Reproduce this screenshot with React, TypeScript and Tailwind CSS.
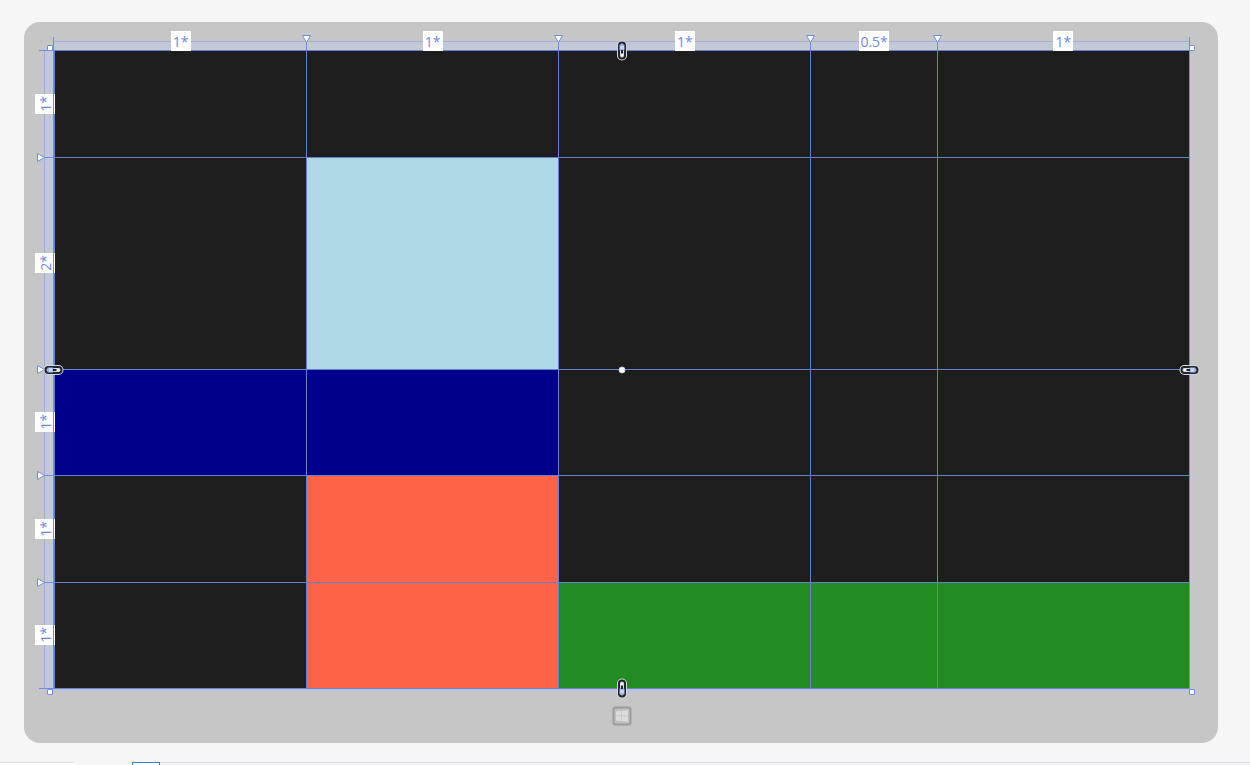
import clsx from "clsx"

const columns = ["1*", "1*", "1*", "0.5*", "1*"];
const rows = ["1*", "2*", "1*", "1*", "1*"];

// "row-column" -> fill of the element placed there
const fills: Record<string, string> = {
    "1-1": "bg-[#add8e6]",
    "2-0": "bg-[#00008b]",
    "2-1": "bg-[#00008b]",
    "3-1": "bg-[#ff6347]",
    "4-1": "bg-[#ff6347]",
    "4-2": "bg-[#228b22]",
    "4-3": "bg-[#228b22]",
    "4-4": "bg-[#228b22]",
};

const TopRuler = () => {
    return (
        <div className="relative col-start-2 grid grid-cols-[2fr_2fr_2fr_1fr_2fr] gap-px pl-0.5 pr-px">
            <div className="absolute inset-x-0 bottom-0 h-[9px] border-t border-[#9fb0d8] bg-[#c2c8d5]" />
            <div className="absolute left-0 bottom-0 h-[13px] w-px bg-[#6d8de0]" />
            <div className="absolute right-0 bottom-0 h-[13px] w-px bg-[#6d8de0]" />
            {columns.map((size, i) => (
                <div key={i} className="relative flex justify-center pt-[9px]">
                    {i > 0 && (
                        <svg className="absolute -left-[5px] top-3" width="9" height="16" viewBox="0 0 9 16">
                            <path d="M4.5 8V16" stroke="#6d8de0" />
                            <path d="M0.5 1.5H8.5L4.5 8.5Z" fill="#fff" stroke="#6d8de0" />
                        </svg>
                    )}
                    <span className="z-10 h-5 min-w-5 bg-white px-px text-center text-sm leading-[22px]">{size}</span>
                </div>
            ))}
        </div>
    )
};

const LeftRuler = () => {
    return (
        <div className="relative col-start-1 grid grid-rows-[1fr_2fr_1fr_1fr_1fr] gap-px py-px">
            <div className="absolute inset-y-0 right-0 w-[9px] border-l border-[#9fb0d8] bg-[#c2c8d5]" />
            <div className="absolute right-0 top-0 h-px w-[14px] bg-[#6d8de0]" />
            <div className="absolute right-0 bottom-0 h-px w-[14px] bg-[#6d8de0]" />
            {rows.map((size, i) => (
                <div key={i} className="relative flex items-center pl-[11px]">
                    {i > 0 && (
                        <svg className="absolute -top-[5px] left-3" width="17" height="9" viewBox="0 0 17 9">
                            <path d="M8 4.5H17" stroke="#6d8de0" />
                            <path d="M1.5 0.5V8.5L8.5 4.5Z" fill="#fff" stroke="#6d8de0" />
                        </svg>
                    )}
                    <span className="z-10 size-5 -rotate-90 bg-white text-center text-sm leading-[22px]">{size}</span>
                </div>
            ))}
        </div>
    )
};

const corners = [
    "-left-[6px] -top-[5px]",
    "-right-[5px] -top-[5px]",
    "-left-[6px] -bottom-[6px]",
    "-right-[5px] -bottom-[6px]",
];

const LinkIcon = ({ className }: { className?: string }) => {
    return (
        <svg className={className} width="11" height="21" viewBox="0 0 11 21">
            <rect x="0.5" y="0.5" width="10" height="20" rx="5" fill="#d6d8db" />
            <rect x="2.5" y="2.5" width="6" height="16" rx="3" fill="#d6d8db" stroke="#22252d" strokeWidth="2" />
            <rect x="3" y="5" width="5" height="5" fill="#c3d7fd" stroke="#4c68ab" strokeWidth="0.6" />
            <path d="M5.5 10V13.5" stroke="#22252d" strokeWidth="2" />
            <circle cx="5.5" cy="15" r="1.2" fill="#f4f5f7" />
        </svg>
    )
};

// links that anchor each side of the selected grid
const anchors = [
    { side: "Top", className: "left-1/2 -top-[10px] -translate-x-1/2", icon: "" },
    { side: "Bottom", className: "left-1/2 -bottom-[10px] -translate-x-1/2", icon: "rotate-180" },
    { side: "Left", className: "-left-[10px] top-1/2 -translate-y-1/2", icon: "-rotate-90" },
    { side: "Right", className: "-right-[10px] top-1/2 -translate-y-1/2", icon: "rotate-90" },
];

const Board = () => {
    return (
        <div className="relative col-start-2 aspect-[1137/639]">
            {/* the grid lines are the background showing through the gaps */}
            <div className="grid h-full grid-cols-[2fr_2fr_2fr_1fr_2fr] grid-rows-[1fr_2fr_1fr_1fr_1fr] gap-px bg-[#6482d2] py-px pl-0.5 pr-px">
                {rows.map((_, r) =>
                    columns.map((_, c) => (
                        <div key={`${r}-${c}`} className={fills[`${r}-${c}`] ?? "bg-[#1e1e1e]"} />
                    ))
                )}
            </div>
            <div className="pointer-events-none absolute inset-0 z-20 border-x border-[#6d8de0]" />
            <div className="absolute inset-x-0 top-full h-[3px] bg-[#bfc5d4]" />
            <div className="absolute inset-y-0 left-full w-[3px] bg-[#c2c7d2]" />
            {corners.map((corner) => (
                <div key={corner} className={clsx("absolute z-20 size-[6px] rounded-[1px] border border-[#6d8de0] bg-white", corner)} />
            ))}
            <div className="absolute left-1/2 top-1/2 z-20 size-[7px] -translate-x-1/2 -translate-y-1/2 rounded-full border border-[#c3d2f6] bg-white" />
            {anchors.map(({ side, className, icon }) => (
                <button
                    key={side}
                    type="button"
                    aria-label={`${side} anchor`}
                    className={clsx("absolute z-30 flex size-[21px] items-center justify-center", className)}
                >
                    <LinkIcon className={icon} />
                </button>
            ))}
        </div>
    )
};

const HomeButton = () => {
    return (
        <button type="button" aria-label="Home" className="mt-[17px]">
            <svg width="20" height="20" viewBox="0 0 20 20">
                <rect x="1.5" y="1.5" width="17" height="17" rx="2" fill="#c0c0c0" stroke="#9c9c9c" strokeWidth="2" />
                <path d="M4 5.2L9.3 4.8V9.6H4ZM9.9 4.7L16 4V9.6H9.9ZM4 10.2H9.3V15L4 14.6ZM9.9 10.2H16V16L9.9 15.1Z" fill="#dcdcdc" />
            </svg>
        </button>
    )
};

export default function App() {
    return (
        <div className="overflow-hidden bg-[#f6f6f6] pt-[22px] font-['Open_Sans','Noto_Sans',sans-serif] text-[#6b8ade]">
            <main className="ml-6 mr-8 grid grid-cols-[29px_1fr_28px] grid-rows-[28px_auto_54px] rounded-2xl bg-[#c6c6c6]">
                <TopRuler />
                <LeftRuler />
                <Board />
                <div className="col-start-2 flex items-start justify-center">
                    <HomeButton />
                </div>
            </main>
            <footer className="mt-[19px] flex h-[3px]">
                <div className="w-[74px] border-t border-[#dedede] bg-white" />
                <div className="w-[58px]" />
                <div className="w-7 border-x border-t border-[#2088d0] bg-white" />
                <div className="flex-1 border-t border-[#dcdde6]" />
            </footer>
        </div>
    )
}
